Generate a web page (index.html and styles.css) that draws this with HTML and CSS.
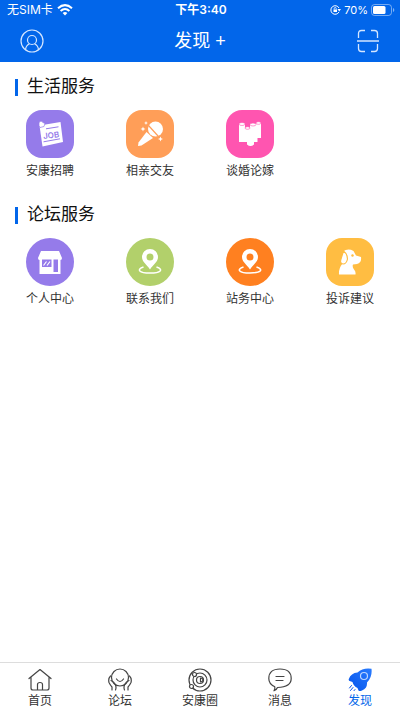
FILE: index.html
```html
<!DOCTYPE html>
<html lang="zh-CN">
<head>
<meta charset="utf-8">
<meta name="viewport" content="width=device-width, initial-scale=1">
<title>发现</title>
<link rel="stylesheet" href="styles.css">
</head>
<body>
<header class="header">
  <div class="status">
    <div class="status-side">
      <span>无SIM卡</span>
      <svg width="16" height="12" viewBox="0 0 16 12" fill="none" stroke="#fff" stroke-width="2"><path d="M1 4.200Q8-2 15 4.200M3.600 7Q8 3 12.400 7"/><path d="M8 11.500 5.600 9Q8 7 10.400 9Z" fill="#fff" stroke="none"/></svg>
    </div>
    <span class="clock">下午3:40</span>
    <div class="status-side status-end">
      <svg width="11" height="10" viewBox="0 0 11 10" fill="none" stroke="#fff"><path d="M9 3A4.300 4.300 0 1 0 9 7"/><path d="M7.500 4h3.500L9.200 6.500Z" fill="#fff" stroke="none"/><rect x="3.500" y="4.500" width="3.500" height="2.500" fill="#fff" stroke="none"/><path d="M4.200 4.500V3.500a1 1 0 0 1 2 0v1" stroke-width=".8"/></svg>
      <span class="percent">70%</span>
      <svg width="24" height="12" viewBox="0 0 24 12"><rect x=".5" y=".5" width="20" height="11" rx="3" fill="none" stroke="#fff" stroke-opacity=".45"/><rect x="2" y="2" width="12.500" height="8" rx="1.500" fill="#fff"/><path d="M22 4v4q1.300-.6 1.300-2T22 4Z" fill="#fff" fill-opacity=".5"/></svg>
    </div>
  </div>
  <div class="nav">
    <button class="icon-button" type="button" aria-label="个人">
      <svg width="24" height="24" viewBox="0 0 24 24" fill="none" stroke="#d5e6ff" stroke-width="1.200"><circle cx="12" cy="12" r="11"/><circle cx="12" cy="11" r="4.500"/><path d="M5.500 20.500Q6 16.500 9.500 14.800M18.500 20.500Q18 16.500 14.500 14.800"/></svg>
    </button>
    <h1 class="title">发现 +</h1>
    <button class="icon-button" type="button" aria-label="扫一扫">
      <svg width="24" height="24" viewBox="0 0 24 24" fill="none" stroke="#d5e6ff" stroke-width="1.300"><path d="M2.500 9V4.500Q2.500 1.500 5.500 1.500H9M15 1.500h3.500q3 0 3 3V9M2.500 15v4.500q0 3 3 3H9M15 22.500h3.500q3 0 3-3V15M1 12h22"/></svg>
    </button>
  </div>
</header>

<main class="main">
  <section class="section">
    <h2 class="heading">生活服务</h2>
    <div class="grid">
      <a class="item" href="#job">
        <svg class="tile violet" viewBox="0 0 48 48"><path d="M13.500 15.500 34.500 12l2.500 20L16.500 36.500Z" fill="#fff"/><path d="M13 12.500q2-3 4 0l2 1-1 3-4 1-1-2Z" fill="#fff" stroke="#957bea" stroke-width=".7"/><path d="m20 18.800 12.500-2M17.500 31.800 34 28.800" stroke="#957bea"/><text class="job" x="17" y="28" transform="rotate(-7 25 25)">JOB</text></svg>
        <span>安康招聘</span>
      </a>
      <a class="item" href="#dating">
        <svg class="tile peach" viewBox="0 0 48 48" fill="#fff"><circle cx="29.500" cy="19" r="7.500"/><path d="m20.500 22 6.500 6-11.500 7.500-3.500.5.500-3.500Z"/><path d="m22.500 15.500 10 11" stroke="#ff9e58" stroke-width="1.200"/><path d="m20 11 .6 1.400L22 13l-1.400.6L20 15l-.6-1.400L18 13l1.400-.6ZM17 16.500l.7 1.800 1.800.7-1.800.7-.7 1.800-.7-1.800-1.800-.7 1.800-.7ZM34.500 26.500l.7 1.800 1.800.7-1.800.7-.7 1.800-.7-1.800-1.800-.7 1.800-.7Z"/></svg>
        <span>相亲交友</span>
      </a>
      <a class="item" href="#wedding">
        <svg class="tile pink" viewBox="0 0 48 48" fill="#fff"><path d="M13 13.500h6V18h5v-3.500h6V13h5v15h-3.500v4H28v2.500q-3.500 3-7 0V32h-8Z"/><g stroke="#ff55b0" stroke-width=".6"><ellipse cx="16" cy="14" rx="3" ry="1.500"/><ellipse cx="21.500" cy="18" rx="2.500" ry="1.300"/><ellipse cx="27" cy="14.500" rx="3" ry="1.500"/><ellipse cx="32.500" cy="13" rx="2.500" ry="1.300"/></g></svg>
        <span>谈婚论嫁</span>
      </a>
    </div>
  </section>

  <section class="section">
    <h2 class="heading">论坛服务</h2>
    <div class="grid">
      <a class="item" href="#me">
        <svg class="tile round violet" viewBox="0 0 48 48"><path d="M15 13h18l3 7q0 2-1.500 2v14h-21V22Q12 22 12 20Z" fill="#fff"/><path d="M16 21.500h9.500V29H16ZM27.500 21.500H32V34h-4.500Z" fill="#957bea"/><path d="m17.500 27.500 3-4M21 27.500l3-4" stroke="#fff" stroke-width="1.200"/></svg>
        <span>个人中心</span>
      </a>
      <a class="item" href="#contact">
        <svg class="tile round green" viewBox="0 0 48 48"><path d="M17.500 29C10 31.500 13 35 24 35s14-3.500 6.500-6" fill="none" stroke="#fff" stroke-width="1.500"/><path fill-rule="evenodd" d="M24 11a8 8 0 0 0-8 8c0 5 4.500 7 8 12.500C27.500 26 32 24 32 19a8 8 0 0 0-8-8Zm0 4.500a3.500 3.500 0 1 1 0 7 3.500 3.500 0 0 1 0-7Z" fill="#fff"/></svg>
        <span>联系我们</span>
      </a>
      <a class="item" href="#station">
        <svg class="tile round orange" viewBox="0 0 48 48"><path d="M17.500 29C10 31.500 13 35 24 35s14-3.500 6.500-6" fill="none" stroke="#fff" stroke-width="1.500"/><path fill-rule="evenodd" d="M24 11a8 8 0 0 0-8 8c0 5 4.500 7 8 12.500C27.500 26 32 24 32 19a8 8 0 0 0-8-8Zm0 4.500a3.500 3.500 0 1 1 0 7 3.500 3.500 0 0 1 0-7Z" fill="#fff"/></svg>
        <span>站务中心</span>
      </a>
      <a class="item" href="#feedback">
        <svg class="tile yellow" viewBox="0 0 48 48"><path d="M17 13.500q5-3.500 10.500-.5L30 17.500l5 1.500q.8 6-4 7l-4 .5q-1 2 1 5 2 2 1.500 5H13q-.5-6 3.500-11Z" fill="#fff"/><path d="M17.500 13q4 3 4 8-1 5-4.500 5-3.500-.5-2-5Z" fill="#fff" stroke="#ffbd42" stroke-width="1.200"/><circle cx="26.500" cy="17.500" r="1.200" fill="#ffbd42"/></svg>
        <span>投诉建议</span>
      </a>
    </div>
  </section>
</main>

<nav class="tabs" aria-label="主导航">
  <a class="tab" href="#home"><svg viewBox="0 0 24 24"><path d="m1 10.500 11-9 11 9M3 9v11q0 2 2 2h14q2 0 2-2V9M9.500 22v-5.500q0-2 2.500-2t2.500 2V22"/></svg><span>首页</span></a>
  <a class="tab" href="#forum"><svg viewBox="0 0 24 24"><circle cx="12" cy="9.500" r="8.500"/><path d="M8.500 11q3.500 5 7 0M2.500 8Q0 10.500 1 14.500q1.500 3 3 4.500v3M3 12.500q3 1 4.500 4.500 1 2.500 0 5M21.500 8q2.500 2.500 1.500 6.500-1.500 3-3 4.500v3M21 12.500q-3 1-4.500 4.500-1 2.500 0 5"/></svg><span>论坛</span></a>
  <a class="tab" href="#circle"><svg viewBox="0 0 24 24"><circle cx="12" cy="12" r="11"/><circle cx="12" cy="12" r="7"/><circle cx="12" cy="12" r="3.500"/><path d="M12.500 10v4q2.500-.2 2.500-2t-2.500-2Z"/><circle cx="6.500" cy="6.500" r="2" fill="#fff"/><circle cx="3.500" cy="18.500" r="2" fill="#fff"/></svg><span>安康圈</span></a>
  <a class="tab" href="#messages"><svg viewBox="0 0 24 24"><path d="M9.500 19.500Q8.500 22 6 22.800q1.200-2 .8-4Q.8 16 .8 10.500.8 1 12 1t11.200 9.500q0 8.500-13.700 9ZM8 8.500h8M8 12.500h7"/></svg><span>消息</span></a>
  <a class="tab active" href="#discover" aria-current="page"><svg viewBox="0 0 24 24"><defs><linearGradient id="rocket" x1="0" y1="1" x2="1" y2="0"><stop offset="0" stop-color="#0755ea"/><stop offset="1" stop-color="#287bff"/></linearGradient></defs><path class="rocket" d="M23.500.8Q15-.5 9.500 4.500 3 5 .8 11q-.6 2 1.500 2.300L4.500 14Q5.500 18 9.500 20l1 2.500q1 1.200 3.500 0 5.500-2.500 5-8Q24.500 9 23.500.8Z"/><circle cx="16" cy="8" r="3.500" stroke="#bdd6ff"/><path class="exhaust" d="m3.500 17.500-2 2.500M5 19.500l-2.500 3M7 21.500l-1 1.200"/></svg><span>发现</span></a>
</nav>
</body>
</html>
```
FILE: styles.css
```css
* { box-sizing: border-box; }

body {
  display: flex;
  flex-direction: column;
  min-height: 100vh;
  margin: 0;
  background: #fff;
  color: #333;
  font: 12px/16px "Liberation Sans", "Noto Sans CJK SC", sans-serif;
}

svg { display: block; flex: none; }
a { color: inherit; text-decoration: none; }
h1, h2 { margin: 0; font-weight: 400; }

.header { background: #0266ea; color: #fff; }

.status {
  display: grid;
  grid-template-columns: 1fr auto 1fr;
  align-items: center;
  height: 20px;
  padding: 0 5px 0 7px;
  font-family: Inter, "Noto Sans CJK SC", sans-serif;
  font-size: 12px;
}
.status-side { display: flex; align-items: center; gap: 4px; }
.status-end { justify-content: flex-end; gap: 3px; }
.percent { font-size: 11px; }
.clock { font-weight: 600; }

.nav {
  display: flex;
  align-items: center;
  justify-content: space-between;
  height: 42px;
  padding: 0 20px;
}
.icon-button { padding: 0; border: 0; background: none; }
.title { font-size: 18px; line-height: 24px; }

.main { flex: 1; padding-top: 15px; }
.section { margin-bottom: 26px; }
.heading {
  display: flex;
  align-items: center;
  gap: 9px;
  padding-left: 15px;
  color: #111;
  font-size: 17px;
  line-height: 20px;
}
.heading::before { content: ""; width: 3px; height: 17px; background: #0266ea; }

.grid { display: grid; grid-template-columns: repeat(4, 1fr); padding-top: 13px; }
.item { display: flex; flex-direction: column; align-items: center; gap: 5px; }
.tile { width: 48px; height: 48px; border-radius: 16px; }
.round { border-radius: 50%; }
.violet { background: #957bea; }
.peach { background: #ff9e58; }
.pink { background: #ff55b0; }
.green { background: #b2d06b; }
.orange { background: #ff8020; }
.yellow { background: #ffbd42; }
.job { fill: #957bea; font: 600 8px Inter, sans-serif; }

.tabs {
  display: grid;
  grid-template-columns: repeat(5, 1fr);
  padding: 5px 0 1px;
  border-top: 1px solid #ddd;
}
.tab { display: flex; flex-direction: column; align-items: center; gap: 1px; }
.tab svg {
  width: 24px;
  height: 24px;
  fill: none;
  stroke: #444;
  stroke-width: 1.2;
  stroke-linecap: round;
  stroke-linejoin: round;
}
.tab .rocket { fill: url(#rocket); stroke: none; }
.tab .exhaust { stroke: #0755ea; stroke-width: 1; }
.active { color: #0266ea; }
```
